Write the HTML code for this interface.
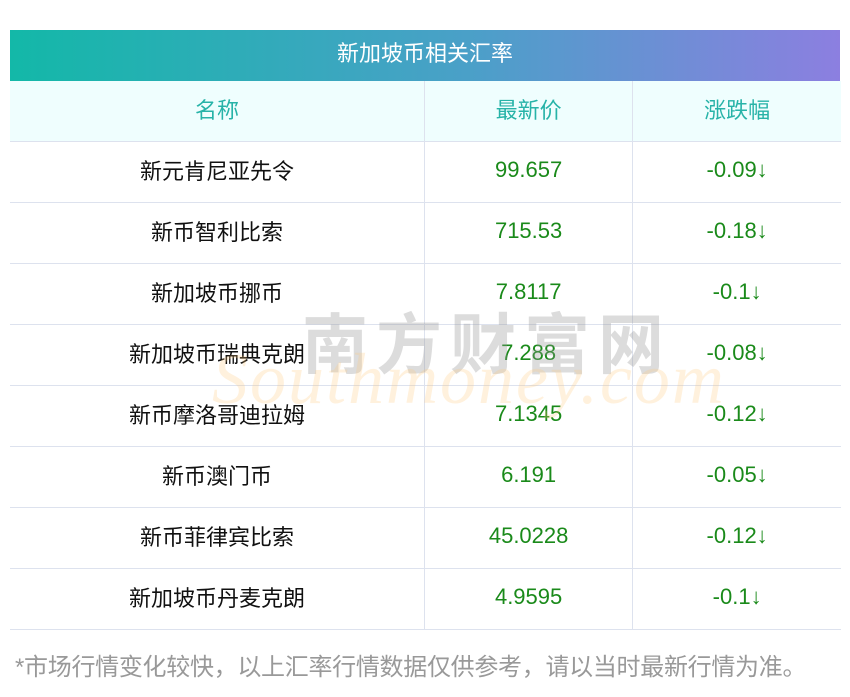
<!DOCTYPE html>
<html><head><meta charset="utf-8"><style>
body{margin:0;width:850px;height:697px;background:#fff;font-family:"Liberation Sans","Noto Sans CJK SC",sans-serif;position:relative;overflow:hidden}
.title{position:absolute;left:10px;top:30px;width:830px;height:51px;background:linear-gradient(90deg,#13b8a8,#4aa0c8 55%,#8c7fe0);color:#fff;font-size:22px;text-align:center;line-height:47px}
table{position:absolute;left:10px;top:81px;width:831px;border-collapse:collapse;table-layout:fixed}
td{height:60px;border:1px solid #dde2ee;text-align:center;font-size:22px;color:#111;padding:0;line-height:22px}
td span{position:relative;top:-2px}
tr:first-child td span{top:0}
tr:first-child td{border-top:none;background:#effefe;color:#27b3a8}
td.g{color:#1a8a1a}
tr td:first-child{border-left:none}
tr td:last-child{border-right:none}
.foot{position:absolute;left:15px;top:647px;font-size:24px;color:#999;white-space:nowrap;letter-spacing:-0.3px}
.wm1{position:absolute;left:302px;top:292px;font-size:66px;color:rgba(150,150,150,.33);letter-spacing:8px;font-weight:bold}
.wm2{position:absolute;left:212px;top:338px;font-size:72px;color:rgba(255,200,120,.25);font-style:italic;font-family:"Liberation Serif",serif;letter-spacing:2px}
</style></head><body>
<div class="title">新加坡币相关汇率</div>
<table>
<colgroup><col style="width:414px"><col style="width:208px"><col style="width:208px"></colgroup>
<tr><td><span>名称</span></td><td><span>最新价</span></td><td><span>涨跌幅</span></td></tr>
<tr><td>新元肯尼亚先令</td><td class="g"><span>99.657</span></td><td class="g"><span>-0.09↓</span></td></tr>
<tr><td>新币智利比索</td><td class="g"><span>715.53</span></td><td class="g"><span>-0.18↓</span></td></tr>
<tr><td>新加坡币挪币</td><td class="g"><span>7.8117</span></td><td class="g"><span>-0.1↓</span></td></tr>
<tr><td>新加坡币瑞典克朗</td><td class="g"><span>7.288</span></td><td class="g"><span>-0.08↓</span></td></tr>
<tr><td>新币摩洛哥迪拉姆</td><td class="g"><span>7.1345</span></td><td class="g"><span>-0.12↓</span></td></tr>
<tr><td>新币澳门币</td><td class="g"><span>6.191</span></td><td class="g"><span>-0.05↓</span></td></tr>
<tr><td>新币菲律宾比索</td><td class="g"><span>45.0228</span></td><td class="g"><span>-0.12↓</span></td></tr>
<tr><td>新加坡币丹麦克朗</td><td class="g"><span>4.9595</span></td><td class="g"><span>-0.1↓</span></td></tr>
</table>
<div class="wm1">南方财富网</div>
<div class="wm2">Southmoney.com</div>
<div class="foot">*市场行情变化较快，以上汇率行情数据仅供参考，请以当时最新行情为准。</div>
</body></html>
